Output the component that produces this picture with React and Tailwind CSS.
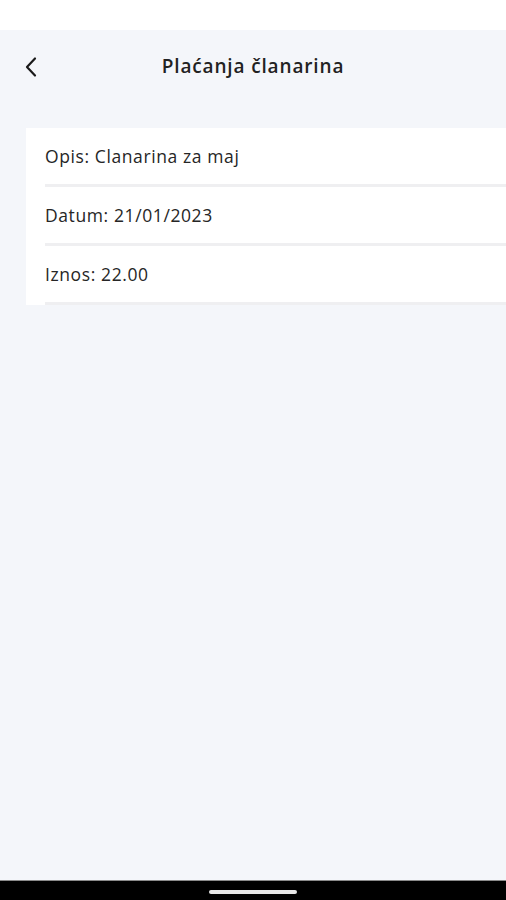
export default function App() {
  const rows = ['Opis: Clanarina za maj', 'Datum: 21/01/2023', 'Iznos: 22.00']

  return (
    <div className="w-[506px] h-[900px] flex flex-col bg-[#f4f6fa] overflow-hidden" style={{ fontFamily: '"Open Sans", Roboto, sans-serif' }}>
      {/* status bar */}
      <div className="h-[30px] bg-white flex-shrink-0" />

      {/* header */}
      <div className="relative h-[73px] flex items-center justify-center flex-shrink-0">
        <button className="absolute left-[20px] top-[24px] w-[22px] h-[26px] flex items-center justify-center text-[#1a1a1a]">
          <svg width="14" height="22" viewBox="0 0 14 22" fill="none">
            <path d="M11 2.5 L3 11 L11 19.5" stroke="currentColor" strokeWidth="2.2" strokeLinecap="round" strokeLinejoin="round" />
          </svg>
        </button>
        <h1 className="text-[19px] font-semibold text-[#222] tracking-[0.85px]">Plaćanja članarina</h1>
      </div>

      {/* card */}
      <div className="mt-[25px] ml-[26px] bg-white flex flex-col">
        {rows.map(r => (
          <div key={r} className="pl-[19px]">
            <div className="h-[56px] flex items-center text-[17.5px] text-[#262626] tracking-[0.6px] pt-[1px]">{r}</div>
            <div className="h-[3px] bg-[#efeff1]" />
          </div>
        ))}
      </div>

      <div className="flex-1" />

      {/* nav bar */}
      <div className="h-[20px] bg-black border-t border-[#8a8a8a] flex justify-center flex-shrink-0">
        <div className="mt-[9px] w-[88px] h-[4px] rounded-full bg-[#e8e8e8]" />
      </div>
    </div>
  )
}
